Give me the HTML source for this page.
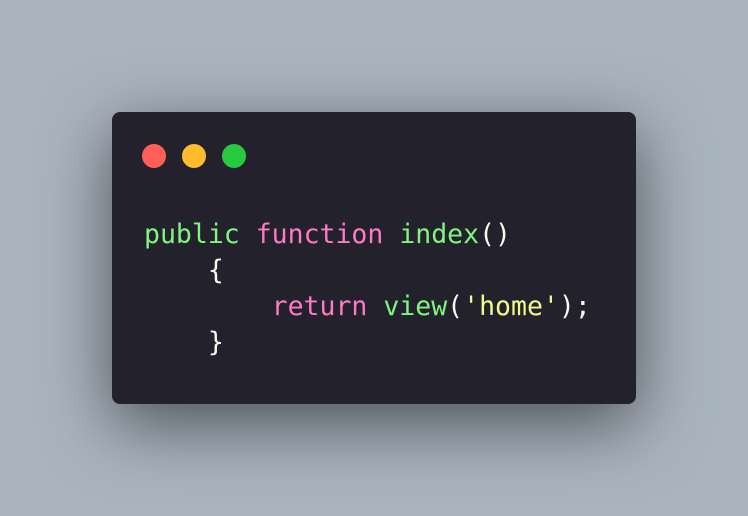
<!DOCTYPE html>
<html><head><style>
html,body{margin:0;padding:0;width:748px;height:516px;overflow:hidden;background:#a9b4bf;}
.win{position:absolute;left:112px;top:112px;width:524px;height:292px;background:#22212c;border-radius:8px;box-shadow:0 20px 68px rgba(0,0,0,0.55);}
.dot{position:absolute;top:32px;width:24px;height:24px;border-radius:50%;}
pre{position:absolute;left:32px;top:105px;margin:0;font-family:"DejaVu Sans Mono",monospace;font-size:26.5px;line-height:36px;color:#f8f8f2;}
.g{color:#80f580}.p{color:#ff79c6}.y{color:#f1fa8c}
</style></head><body>
<div class="win">
<div class="dot" style="left:30px;background:#ff5f56"></div>
<div class="dot" style="left:70px;background:#ffbd2e"></div>
<div class="dot" style="left:110px;background:#27c93f"></div>
<pre><span class="g">public</span> <span class="p">function</span> <span class="g">index</span>()
    {
        <span class="p">return</span> <span class="g">view</span>(<span class="y">'home'</span>);
    }</pre>
</div>
</body></html>
